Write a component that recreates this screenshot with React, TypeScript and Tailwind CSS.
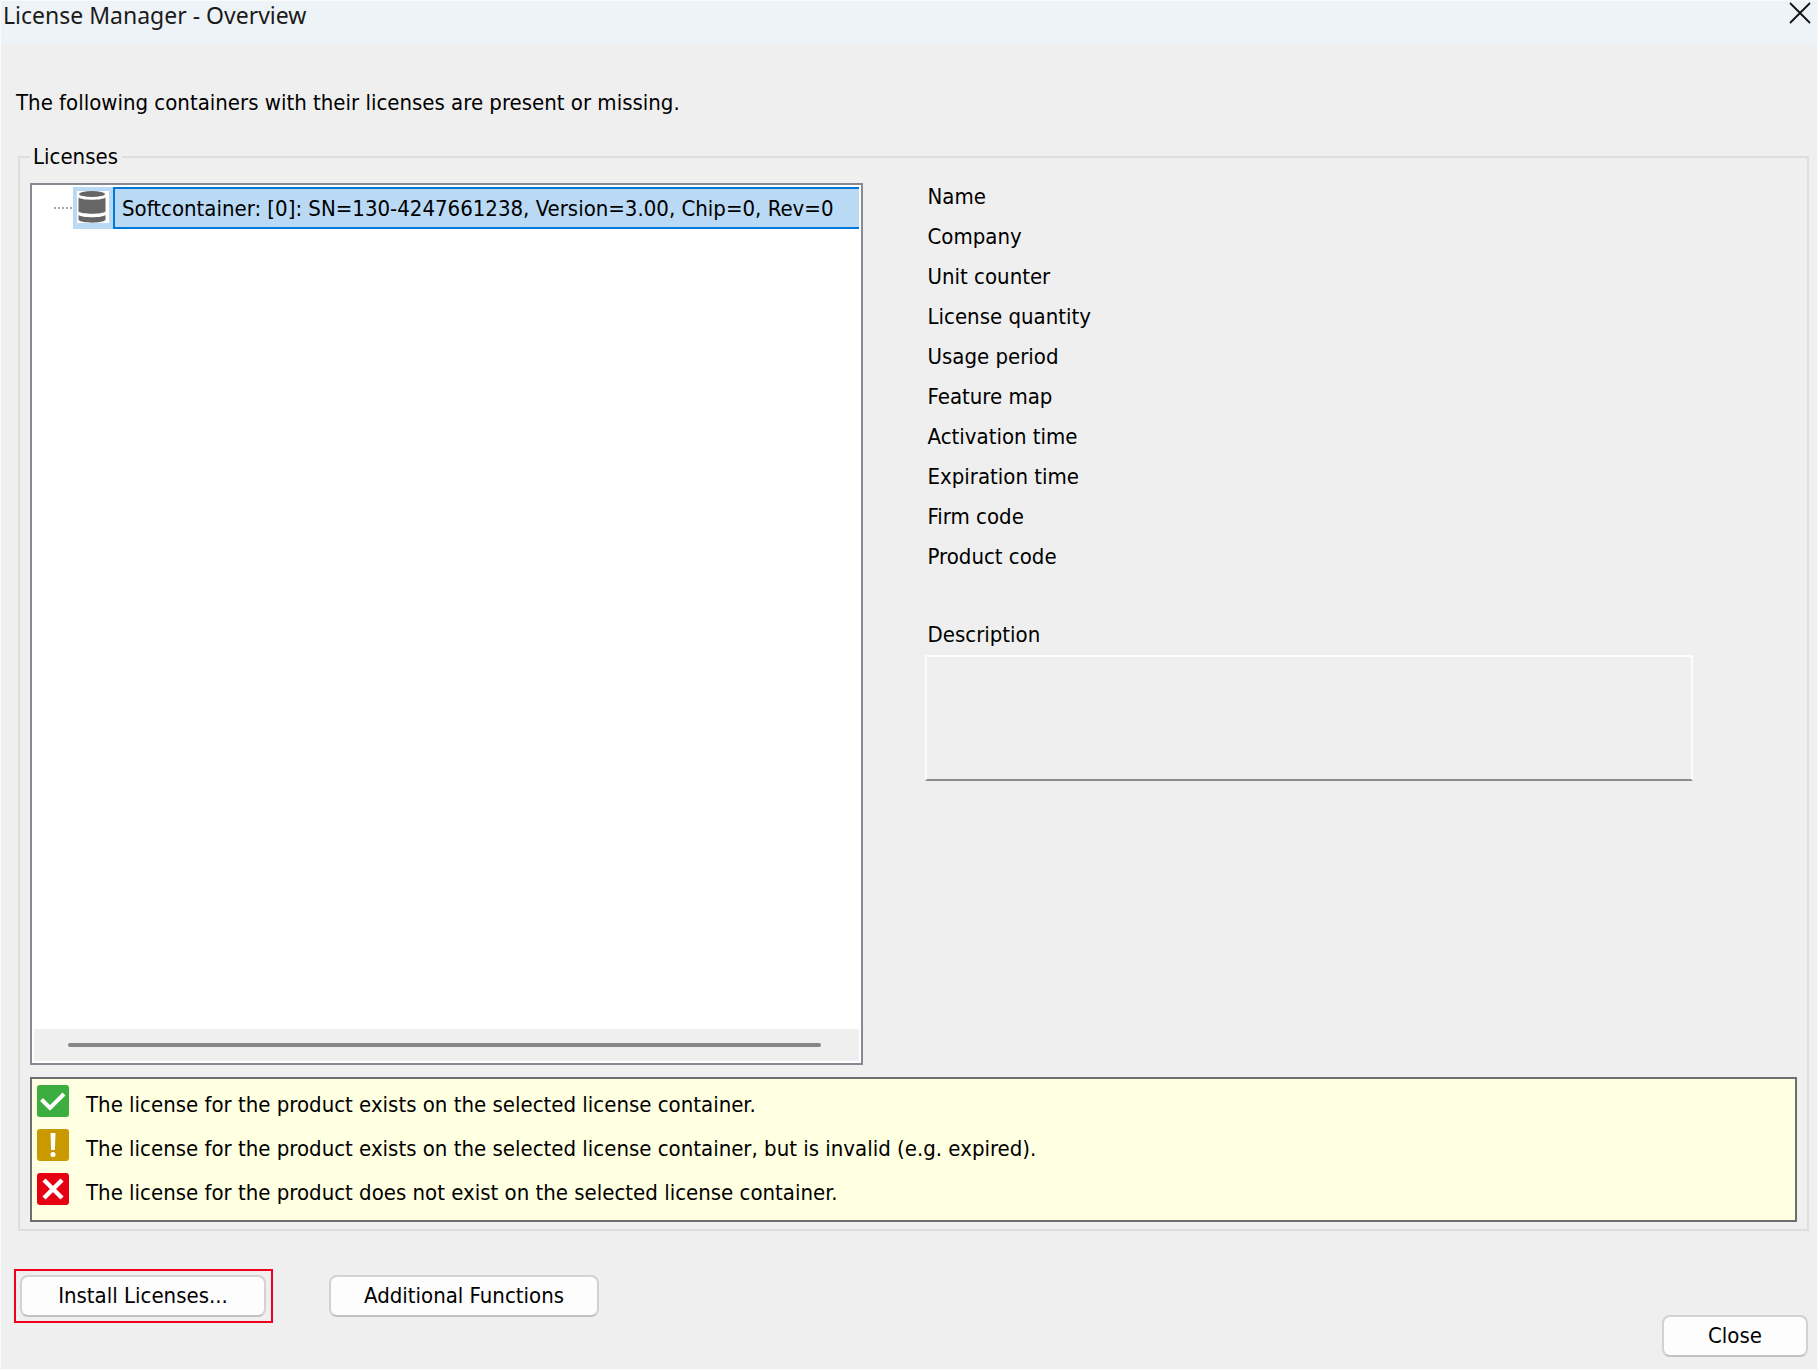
import type { ButtonHTMLAttributes, ReactNode } from 'react';

const details = [
  'Name',
  'Company',
  'Unit counter',
  'License quantity',
  'Usage period',
  'Feature map',
  'Activation time',
  'Expiration time',
  'Firm code',
  'Product code',
];

function CloseIcon() {
  return (
    <svg className="h-[22px] w-[22px]" viewBox="0 0 22 22" stroke="#111" strokeWidth="1.8" strokeLinecap="round">
      <path d="M1.5 1.5l19 19M20.5 1.5l-19 19" />
    </svg>
  );
}

function ContainerIcon() {
  return (
    <svg className="h-8 w-8 bg-white" viewBox="0 0 32 32" fill="#666">
      <ellipse cx="15" cy="3" rx="13" ry="3" />
      <path d="M1.5 6.500c3 3 24 3 27 0v14c-3 3-24 3-27 0z" />
      <path d="M1.500 24c3 3 24 3 27 0v5c-3 3.500-24 3.500-27 0z" />
    </svg>
  );
}

function StatusIcon({ color, children }: { color: string; children: ReactNode }) {
  return (
    <svg className="h-8 w-8 shrink-0" viewBox="0 0 32 32">
      <rect width="32" height="32" rx="3" fill={color} />
      {children}
    </svg>
  );
}

function Button({ className = '', ...props }: ButtonHTMLAttributes<HTMLButtonElement>) {
  return (
    <button
      type="button"
      className={`h-[42px] rounded-lg border-2 border-[#d2d2d2] border-b-[#c2c2c2] bg-[#fdfdfd] ${className}`}
      {...props}
    />
  );
}

function LicenseTree() {
  return (
    <div className="flex flex-col border-2 border-[#868a92] bg-white p-[2px]">
      <ul role="tree" className="flex-1">
        <li role="treeitem" aria-selected="true" className="flex h-[42px] items-center pl-5">
          <span className="mr-px w-[18px] border-t-2 border-dotted border-[#a8a8a8]" />
          <span className="flex h-full w-10 items-start bg-[#b9d9f4] pl-1 pt-1">
            <ContainerIcon />
          </span>
          <span className="flex h-full flex-1 items-center whitespace-nowrap border-2 border-r-0 border-[#0078d7] bg-[#b9d9f4] pl-[7px] pt-[2px]">
            Softcontainer: [0]: SN=130-4247661238, Version=3.00, Chip=0, Rev=0
          </span>
        </li>
      </ul>
      <div className="flex h-8 items-center bg-[#efefef] pl-[34px] pr-[38px]">
        <div className="h-1 w-full rounded-sm bg-[#868686]" />
      </div>
    </div>
  );
}

function LicenseDetails() {
  return (
    <div className="pl-[62px] pr-[104px]">
      <dl className="flex flex-col gap-3 pl-[3px]">
        {details.map((label) => (
          <div key={label} className="grid grid-cols-[200px_1fr]">
            <dt>{label}</dt>
            <dd />
          </div>
        ))}
      </dl>
      <label htmlFor="description" className="mt-[50px] block pl-[3px]">
        Description
      </label>
      <textarea
        id="description"
        readOnly
        className="mt-[6px] block h-[126px] w-full resize-none border-2 border-[#fcfcfc] border-b-[#8c8c8c] bg-[#efefef]"
      />
    </div>
  );
}

function StatusLegend() {
  return (
    <ul className="mt-3 h-[145px] border-2 border-[#6e6e6e] bg-[#ffffe1] pl-[5px] pt-[6px]">
      <li className="flex h-11 gap-[17px]">
        <StatusIcon color="#3bae3f">
          <path d="M4.5 14.5l8.5 8.5L27 9" fill="none" stroke="#fff" strokeWidth="4" />
        </StatusIcon>
        <span className="pt-[6px]">The license for the product exists on the selected license container.</span>
      </li>
      <li className="flex h-11 gap-[17px]">
        <StatusIcon color="#c99a00">
          <path d="M13.5 4h5l-.6 17h-3.8z" fill="#fff" />
          <circle cx="16" cy="25.5" r="2.500" fill="#fff" />
        </StatusIcon>
        <span className="pt-[6px]">
          The license for the product exists on the selected license container, but is invalid (e.g. expired).
        </span>
      </li>
      <li className="flex h-11 gap-[17px]">
        <StatusIcon color="#e60012">
          <path d="M7 7l18 18M25 7L7 25" stroke="#fff" strokeWidth="4.500" />
        </StatusIcon>
        <span className="pt-[6px]">The license for the product does not exist on the selected license container.</span>
      </li>
    </ul>
  );
}

export default function App() {
  return (
    <div className="flex min-h-screen flex-col border border-[#fafafa] bg-[#efefef] font-['DejaVu_Sans_Condensed','DejaVu_Sans',sans-serif] text-[22px] leading-[28px] text-black">
      <header className="flex h-[43px] items-start justify-between bg-[#eef3f8] pl-[2px] pr-[6px]">
        <h1 className="font-['Noto_Sans',sans-serif] text-[23px] leading-[28px] text-[#1b1b1b]">
          License Manager - Overview
        </h1>
        <button type="button" aria-label="Close window" className="pt-px">
          <CloseIcon />
        </button>
      </header>

      <main className="flex flex-1 flex-col pb-3 pl-[17px] pr-2 pt-[45px]">
        <p className="-ml-[2px]">The following containers with their licenses are present or missing.</p>

        <fieldset className="mt-[26px] border-2 border-[#dedede] px-[10px] pb-[7px] pt-3">
          <legend className="pl-[3px] pr-1">Licenses</legend>
          {/* the tree takes whatever height the fixed rows leave */}
          <div className="grid min-h-[calc(100vh-488px)] grid-cols-[833fr_935fr]">
            <LicenseTree />
            <LicenseDetails />
          </div>
          <StatusLegend />
        </fieldset>

        <footer className="-ml-1 mt-[38px] flex h-[88px] justify-between pr-px">
          <div className="flex items-start gap-14">
            <div className="border-2 border-[#f00020] p-1 pr-[5px]">
              <Button className="block w-[246px]">Install Licenses...</Button>
            </div>
            <Button className="mt-[6px] w-[270px]">Additional Functions</Button>
          </div>
          <Button className="w-[146px] self-end">Close</Button>
        </footer>
      </main>
    </div>
  );
}
